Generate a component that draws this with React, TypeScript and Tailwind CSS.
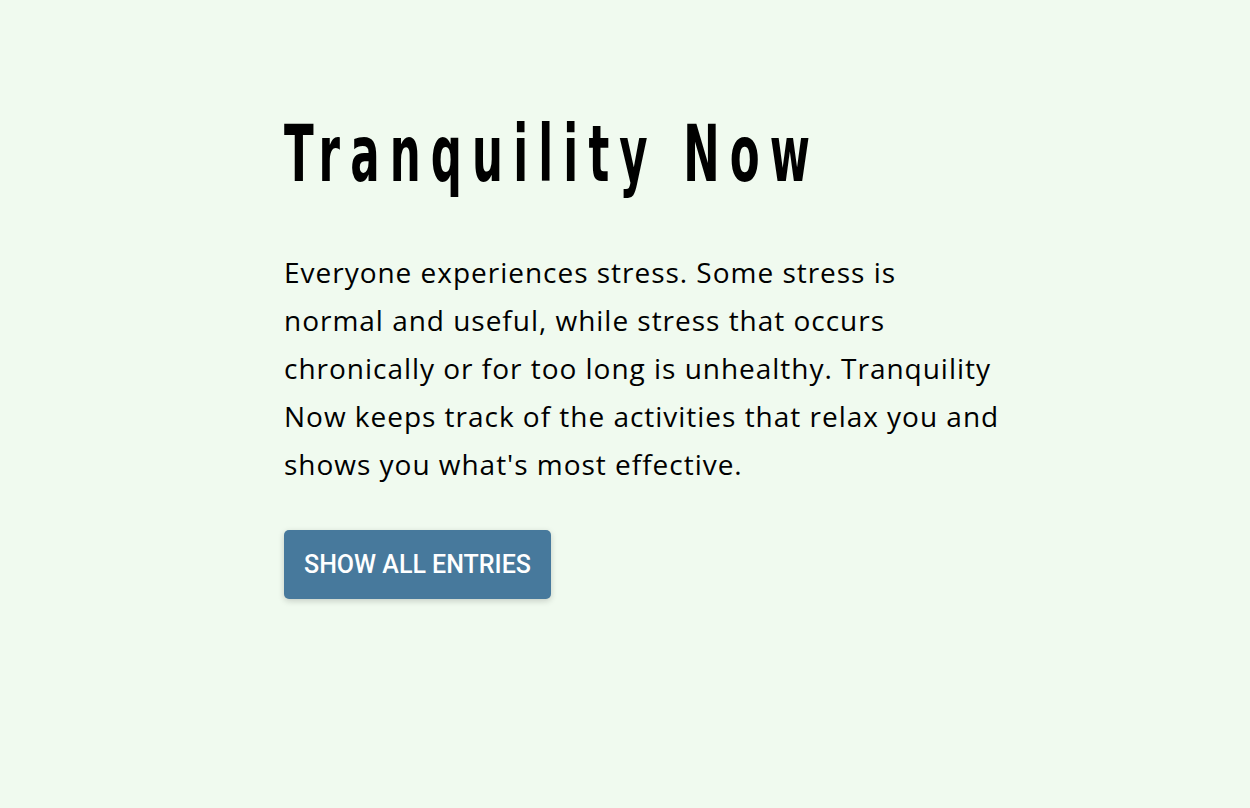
import React from 'react';

const App: React.FC = () => {
  return (
    <div className="min-h-screen w-full bg-[#f0faef] text-black">
      <main className="pl-[284px] pt-[110px]">
        <h1 className="inline-block origin-left scale-x-[0.62] whitespace-nowrap font-['DejaVu_Sans_Condensed','DejaVu_Sans',sans-serif] text-[78px] font-bold leading-[88px] tracking-[0.21em] text-black">
          Tranquility Now
        </h1>
        <p className="mt-[50px] w-[717px] font-['Open_Sans','Noto_Sans',sans-serif] text-[28px] leading-[48px] tracking-[0.035em]">
          Everyone experiences stress. Some stress is normal and useful, while stress that occurs chronically or for too long is unhealthy. Tranquility Now keeps track of the activities that relax you and shows you what's most effective.
        </p>
        <button className="mt-[42px] h-[69px] rounded-[5px] bg-[#47799c] px-[20px] font-['Roboto','Liberation_Sans',sans-serif] text-[25px] font-medium uppercase text-white shadow-[0_2px_6px_rgba(0,0,0,0.18)]">
          Show all entries
        </button>
      </main>
    </div>
  );
};

export default App;
